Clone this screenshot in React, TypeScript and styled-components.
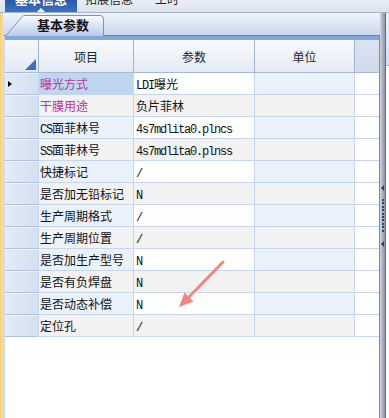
import styled, { createGlobalStyle } from 'styled-components';

interface Param {
  name: string;
  value: string;
  accent?: boolean;
}

type Col = 'name' | 'value' | 'unit' | 'blank';

const params: Param[] = [
  { name: '曝光方式', value: 'LDI曝光', accent: true },
  { name: '干膜用途', value: '负片菲林', accent: true },
  { name: 'CS面菲林号', value: '4s7mdlita0.plncs' },
  { name: 'SS面菲林号', value: '4s7mdlita0.plnss' },
  { name: '快捷标记', value: '/' },
  { name: '是否加无铅标记', value: 'N' },
  { name: '生产周期格式', value: '/' },
  { name: '生产周期位置', value: '/' },
  { name: '是否加生产型号', value: 'N' },
  { name: '是否有负焊盘', value: 'N' },
  { name: '是否动态补偿', value: 'N' },
  { name: '定位孔', value: '/' },
];

const GlobalStyle = createGlobalStyle`
  body {
    margin: 0;
    background: #fff;
    font-family: 'Noto Sans CJK SC', 'Liberation Sans', sans-serif;
  }
`;

const Page = styled.div`
  position: relative;
  width: 389px;
  height: 418px;
  display: flex;
  flex-direction: column;
  overflow: hidden;
  background: #fff;
`;

const TopStrip = styled.div`
  height: 12px;
  border-bottom: 1px solid #a9b6c9;
  background: linear-gradient(#e9eef5, #dce3ed);
  display: flex;
  gap: 8px;
  padding-left: 5px;
  overflow: hidden;
`;

const TopTab = styled.div<{ $active?: boolean }>`
  position: relative;
  height: 12px;
  padding: 0 ${(p) => (p.$active ? '10px' : '0')};
  background: ${(p) => (p.$active ? 'linear-gradient(#2a5aa8, #3d71c0)' : 'transparent')};
  color: ${(p) => (p.$active ? '#fff' : '#222')};
  font-size: ${(p) => (p.$active ? '13px' : '12px')};
  font-weight: ${(p) => (p.$active ? 'bold' : 'normal')};
  line-height: 14px;
  white-space: nowrap;
  &::after {
    content: '';
    display: ${(p) => (p.$active ? 'block' : 'none')};
    position: absolute;
    left: 50%;
    bottom: 0;
    margin-left: -4px;
    border-left: 4px solid transparent;
    border-right: 4px solid transparent;
    border-bottom: 4px solid #fff;
  }
`;

const TopLabel = styled.span`
  display: block;
  margin-top: -8px;
`;

const Body = styled.div`
  flex: 1;
  display: flex;
  min-height: 0;
`;

const YellowStrip = styled.div`
  width: 3px;
  background: linear-gradient(to right, #f3cf79, #f9df9c);
`;

const Main = styled.div`
  width: 377px;
  display: flex;
  flex-direction: column;
`;

const SubStrip = styled.div`
  height: 22px;
  display: flex;
  align-items: flex-end;
  padding-left: 2px;
  background: linear-gradient(#eef3fa, #c9d8ee);
`;

const SubTab = styled.div`
  position: relative;
  width: 99px;
  height: 20px;
  display: flex;
  align-items: center;
  padding-left: 32px;
  box-sizing: border-box;
  font-size: 13px;
  font-weight: bold;
  color: #111;
`;

const TabShape = styled.svg`
  position: absolute;
  left: 0;
  top: 0;
  width: 99px;
  height: 21px;
`;

const TabLabel = styled.span`
  position: relative;
  line-height: 20px;
`;

const Panel = styled.div`
  flex: 1;
  border-top: 1px solid #5f82bd;
  box-shadow: inset 0 4px 0 #86a7dc;
  padding-top: 4px;
  border-left: 2px solid #cfdbec;
  border-right: 1px solid #6d8cc4;
  background: #fff;
`;

const Grid = styled.div`
  display: grid;
  grid-template-columns: 33px 95px 121px 100px 25px;
  grid-template-rows: 33px;
  grid-auto-rows: 22px;
`;

const Corner = styled.div`
  position: relative;
  box-sizing: border-box;
  border-bottom: 1px solid #a7b9d3;
  background: linear-gradient(#f6f8fc, #e3eaf5);
  &::after {
    content: '';
    position: absolute;
    right: 2px;
    bottom: 2px;
    border-left: 11px solid transparent;
    border-bottom: 11px solid #3c6fc2;
  }
`;

const HeadCell = styled.div<{ $dark?: boolean }>`
  box-sizing: border-box;
  border-left: 1px solid #a3b6d1;
  border-bottom: 1px solid #a7b9d3;
  background: ${(p) => (p.$dark ? 'linear-gradient(#dbe4f1, #cfdaeb)' : 'linear-gradient(#f8fafd, #e4ebf5)')};
  display: flex;
  align-items: center;
  justify-content: center;
  font-size: 12px;
  color: #1b2433;
`;

const RowHead = styled.div<{ $current?: boolean }>`
  position: relative;
  box-sizing: border-box;
  border-bottom: 1px solid #b1c2dc;
  border-top: 1px solid #eef3fa;
  background: linear-gradient(to right, #e4ecf7, #d3dff0);
  &::after {
    content: '';
    display: ${(p) => (p.$current ? 'block' : 'none')};
    position: absolute;
    left: 3px;
    top: 7px;
    border-top: 3px solid transparent;
    border-bottom: 3px solid transparent;
    border-left: 4px solid #000;
  }
`;

const cellBg = (col: Col, alt: boolean, selected?: boolean) => {
  if (selected) return '#bfd6f1';
  if (col === 'blank') return '#fff';
  if (alt) return '#f2f2f2';
  return col === 'value' ? '#fff' : '#e9f1fb';
};

const Cell = styled.div<{ $col: Col; $alt: boolean; $selected?: boolean; $accent?: boolean }>`
  box-sizing: border-box;
  border-left: 1px solid #c6d6ee;
  border-bottom: 1px solid #c6d6ee;
  background: ${(p) => cellBg(p.$col, p.$alt, p.$selected)};
  padding-left: ${(p) => (p.$col === 'value' ? '2px' : '1px')};
  font-size: 12px;
  line-height: 21px;
  color: ${(p) => (p.$accent ? '#c0309a' : '#111')};
  white-space: nowrap;
  overflow: hidden;
`;

const Latin = styled.span`
  font-family: 'Liberation Mono', monospace;
  font-size: 12px;
  letter-spacing: -1.2px;
`;

const Splitter = styled.div`
  width: 6px;
  border-right: 1px solid #5d6f8f;
  box-sizing: border-box;
  background: linear-gradient(to right, #d4d8de, #aab2c0 50%, #8e99ad);
  display: flex;
  flex-direction: column;
  align-items: center;
  justify-content: center;
  gap: 8px;
`;

const SplitArrow = styled.div`
  width: 0;
  height: 0;
  border-top: 3px solid transparent;
  border-bottom: 3px solid transparent;
  border-right: 3px solid #1f3d78;
`;

const SplitDots = styled.div`
  width: 2px;
  height: 34px;
  background: repeating-linear-gradient(#24447e 0 2px, transparent 2px 3.4px);
`;

const RightEdge = styled.div`
  width: 3px;
  display: flex;
  flex-direction: column;
`;

const RightHead = styled.div`
  height: 52px;
  background: linear-gradient(#eef3fa, #d0ddef);
  border-bottom: 1px solid #a7b9d3;
`;

const Annotation = styled.svg`
  position: absolute;
  left: 0;
  top: 0;
  pointer-events: none;
`;

function MixedText({ text }: { text: string }) {
  const parts = text.split(/([\x20-\x7e]+)/).filter(Boolean);
  return (
    <>
      {parts.map((part, i) =>
        /^[\x20-\x7e]+$/.test(part) ? <Latin key={i}>{part}</Latin> : <span key={i}>{part}</span>,
      )}
    </>
  );
}

export default function App() {
  return (
    <Page>
      <GlobalStyle />
      <TopStrip>
        <TopTab $active>
          <TopLabel>基本信息</TopLabel>
        </TopTab>
        <TopTab>
          <TopLabel>拓展信息</TopLabel>
        </TopTab>
        <TopTab style={{ marginLeft: 14 }}>
          <TopLabel>工时</TopLabel>
        </TopTab>
      </TopStrip>

      <Body>
        <YellowStrip />
        <Main>
          <SubStrip>
            <SubTab>
              <TabShape viewBox="0 0 99 21">
                <defs>
                  <linearGradient id="tabFill" x1="0" y1="0" x2="0" y2="1">
                    <stop offset="0" stopColor="#fbfcfe" />
                    <stop offset="1" stopColor="#b6cbec" />
                  </linearGradient>
                </defs>
                <path
                  d="M0.5 21 L17.5 1.5 Q18.5 0.5 20 0.5 L95 0.5 Q98.5 0.5 98.5 4 L98.5 21"
                  fill="url(#tabFill)"
                  stroke="#7b93b9"
                />
              </TabShape>
              <TabLabel>基本参数</TabLabel>
            </SubTab>
          </SubStrip>

          <Panel>
            <Grid>
              <Corner />
              <HeadCell>项目</HeadCell>
              <HeadCell>参数</HeadCell>
              <HeadCell>单位</HeadCell>
              <HeadCell $dark />
              {params.map((row, i) => {
                const alt = i % 2 === 1;
                return [
                  <RowHead key={`h${i}`} $current={i === 0} />,
                  <Cell key={`n${i}`} $col="name" $alt={alt} $selected={i === 0} $accent={row.accent}>
                    <MixedText text={row.name} />
                  </Cell>,
                  <Cell key={`v${i}`} $col="value" $alt={alt}>
                    <MixedText text={row.value} />
                  </Cell>,
                  <Cell key={`u${i}`} $col="unit" $alt={alt} />,
                  <Cell key={`b${i}`} $col="blank" $alt={alt} />,
                ];
              })}
            </Grid>
          </Panel>
        </Main>

        <Splitter>
          <SplitArrow />
          <SplitDots />
          <SplitArrow />
        </Splitter>
        <RightEdge>
          <RightHead />
        </RightEdge>
      </Body>

      <Annotation width="389" height="418" viewBox="0 0 389 418">
        <line x1="223" y1="262" x2="189" y2="297" stroke="#f28686" strokeWidth="3" strokeLinecap="round" />
        <polygon points="179,307 193.5,301.5 184.5,292.5" fill="#f28686" />
      </Annotation>
    </Page>
  );
}
